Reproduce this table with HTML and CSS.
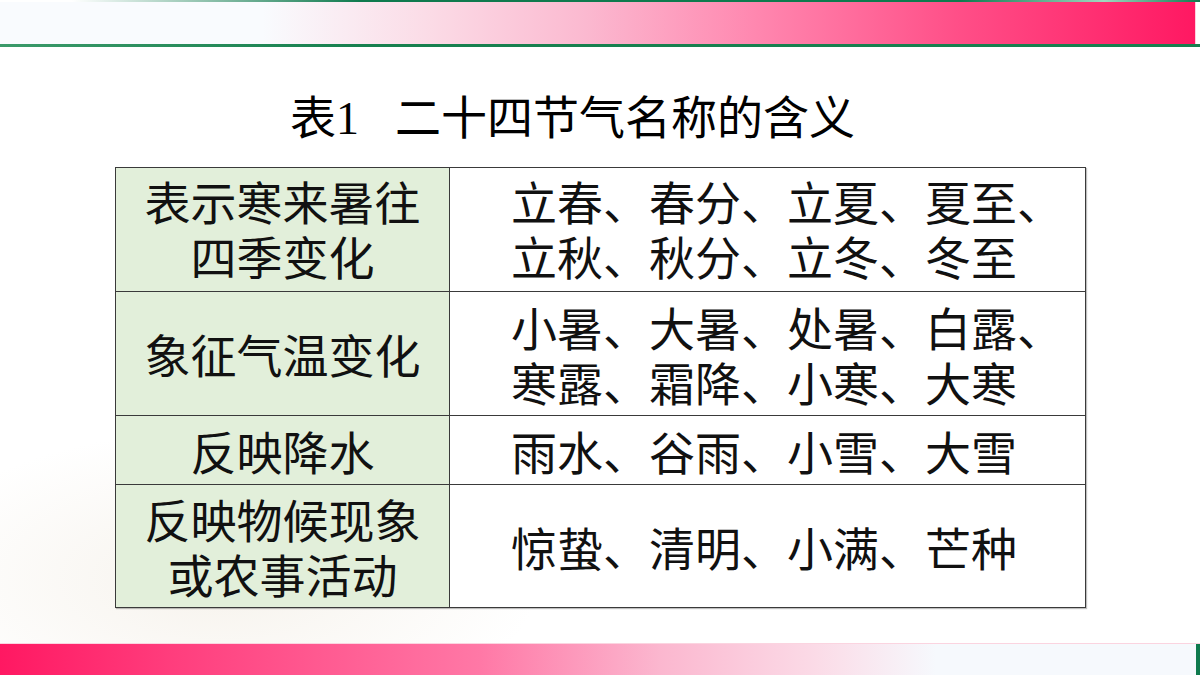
FILE: index.html
```html
<!DOCTYPE html>
<html lang="zh-CN">
<head>
<meta charset="utf-8">
<link rel="stylesheet" href="styles.css">
</head>
<body>
<div class="slide">
  <div class="top-band">
    <div class="top-line"></div>
    <div class="top-bar"></div>
    <div class="top-line2"></div>
  </div>
  <div class="watermark"></div>
  <h1 class="title"><span class="t-label">表<span class="num">1</span></span><span class="t-main">二十四节气名称的含义</span></h1>
  <table class="terms">
    <tr class="r1">
      <td class="cat">表示寒来暑往<br>四季变化</td>
      <td class="names">立春、春分、立夏、夏至、<br>立秋、秋分、立冬、冬至</td>
    </tr>
    <tr class="r2">
      <td class="cat">象征气温变化</td>
      <td class="names">小暑、大暑、处暑、白露、<br>寒露、霜降、小寒、大寒</td>
    </tr>
    <tr class="r3">
      <td class="cat">反映降水</td>
      <td class="names">雨水、谷雨、小雪、大雪</td>
    </tr>
    <tr class="r4">
      <td class="cat">反映物候现象<br>或农事活动</td>
      <td class="names">惊蛰、清明、小满、芒种</td>
    </tr>
  </table>
  <div class="bottom-band"></div>
</div>
</body>
</html>
```
FILE: styles.css
```css
html, body {
  margin: 0;
  padding: 0;
  background: #ffffff;
}
.slide {
  position: relative;
  width: 1200px;
  height: 675px;
  overflow: hidden;
  background: #ffffff;
  font-family: "Noto Sans CJK SC", "Noto Sans", sans-serif;
  color: #111;
}
.top-band {
  height: 47px;
  display: flex;
  flex-direction: column;
}
.top-line {
  height: 2px;
  background: linear-gradient(to right, #ffffff 0%, #ffffff 6%, #0f7a4e 30%, #0f7a4e 80%, #9fd8c0 92%, #0f7a4e 100%);
}
.top-bar {
  height: 42px;
  margin-right: 4px;
  background: linear-gradient(to right, #f9fbfe 0%, #f9fbfe 22%, #fbdbe6 36%, #fbb9d0 49%, #ff88b0 63%, #ff4f88 80%, #ff1862 100%);
  border-right: 1px solid #ffd0de;
}
.top-line2 {
  height: 3px;
  background: linear-gradient(to right, #3b9a6a 0%, #17804f 30%, #17804f 100%);
}
.watermark {
  position: absolute;
  left: 0;
  top: 380px;
  width: 700px;
  height: 270px;
  background: radial-gradient(ellipse 320px 150px at 220px 200px, rgba(236, 228, 214, 0.45), rgba(255,255,255,0) 100%);
  pointer-events: none;
}
.title {
  position: relative;
  margin: 38px 0 0 290px;
  height: 82px;
  font-size: 46px;
  font-weight: normal;
  line-height: 58px;
  font-family: "Noto Sans CJK SC", sans-serif;
  display: flex;
  color: #000;
}
.t-label {
  margin-right: 36px;
}
.num {
  font-family: "Liberation Serif", serif;
  margin-left: 0;
}
.t-main {
  letter-spacing: 0;
}
.terms {
  position: relative;
  margin-left: 115px;
  border-collapse: collapse;
  width: 971px;
  font-size: 46px;
  line-height: 55px;
  box-shadow: 1px 1px 1px rgba(0,0,0,0.25);
}
.terms td {
  border: 1.5px solid #3a3a3a;
  padding: 0;
  vertical-align: middle;
}
.cat {
  width: 333px;
  background: #e2efda;
  text-align: center;
}
.names {
  background: #ffffff;
  padding-left: 61px !important;
  text-align: left;
}
.r1 td { height: 119px; padding-bottom: 4px; }
.r2 td { height: 123px; }
.r3 td { height: 68px; }
.r4 td { height: 122px; }
.bottom-band {
  position: absolute;
  left: 0;
  top: 643px;
  width: 1200px;
  height: 32px;
  display: flex;
  background: linear-gradient(to right, #ff1862 0%, #ff3f7e 15%, #ff78a6 40%, #fbb7cf 55%, #fbdbe7 68%, #f6f9fd 78%, #f6f9fd 100%);
  border-top: 1px solid #fbd4e0;
  box-shadow: inset -4px 0 0 #0f7a4e;
}
```
